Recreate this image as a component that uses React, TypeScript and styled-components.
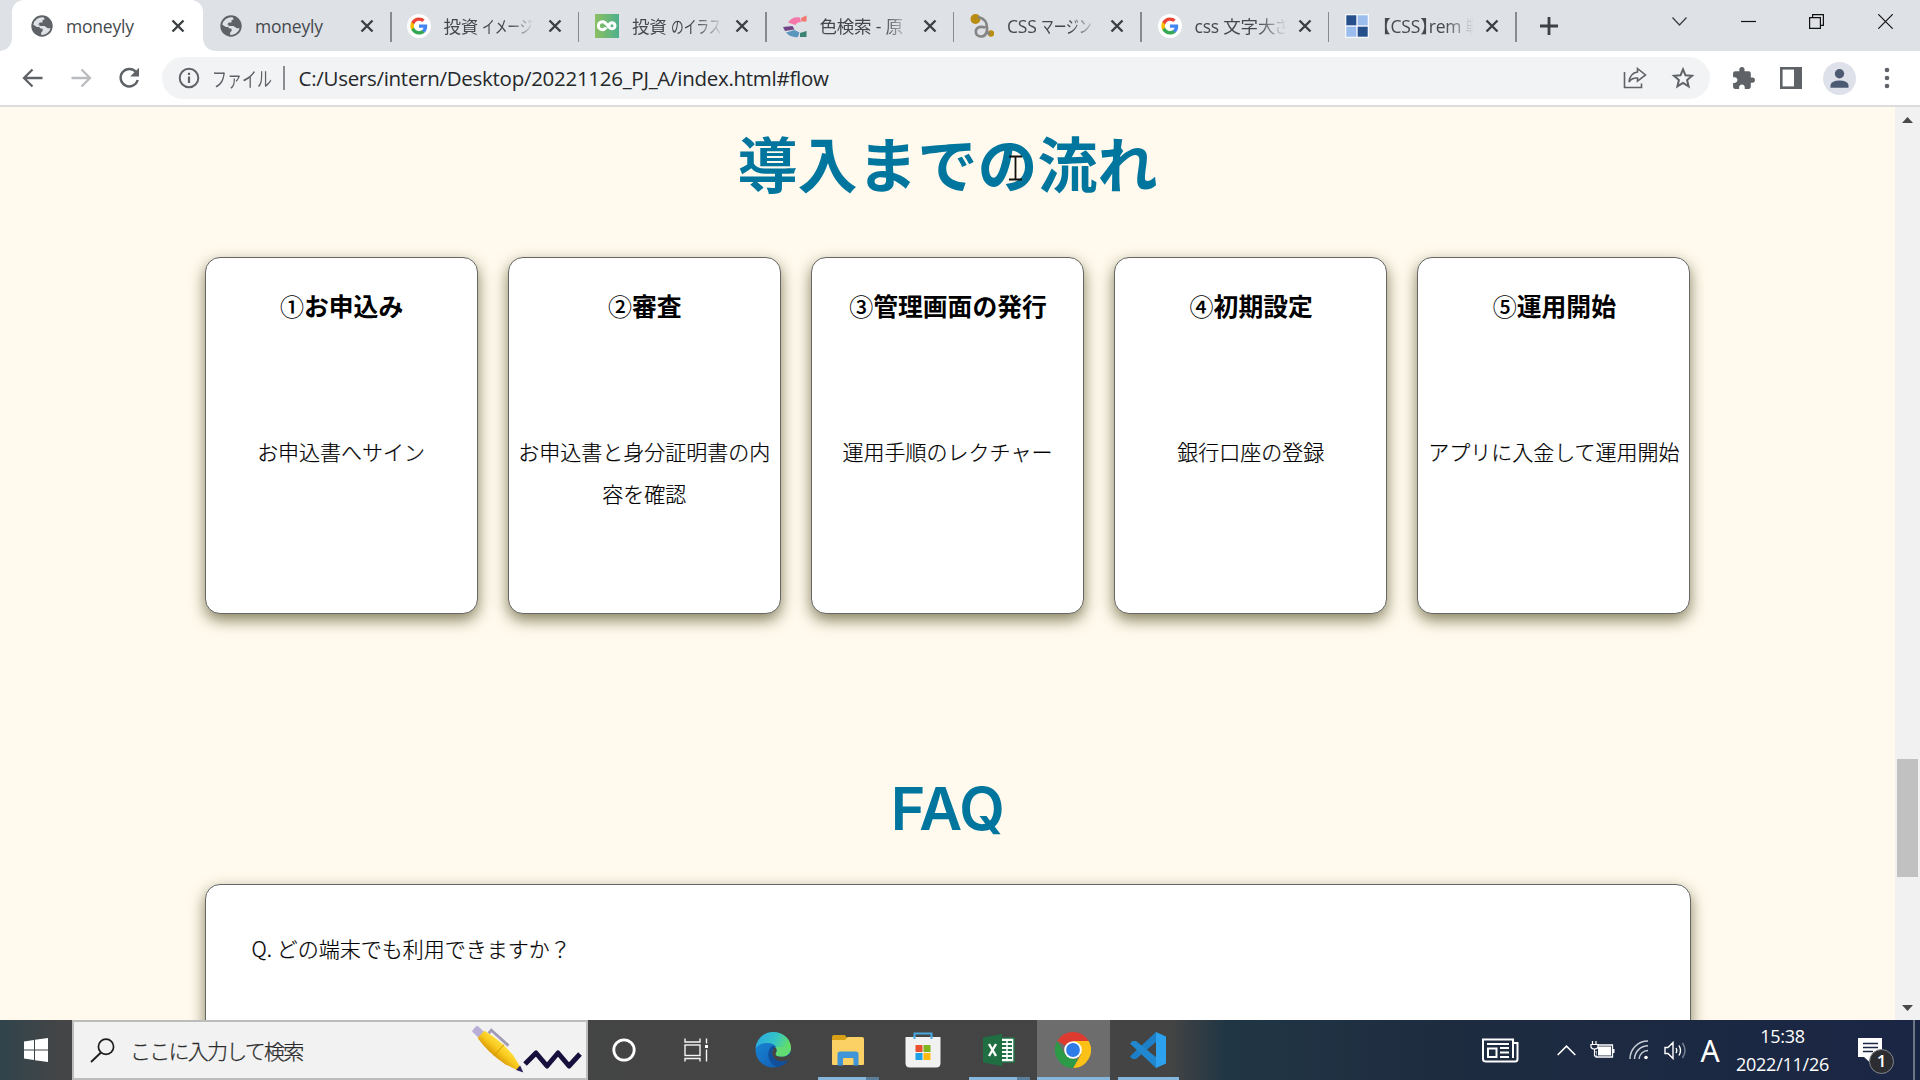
import React from "react";
import styled, { createGlobalStyle } from "styled-components";

const JP = '"Noto Sans CJK JP", sans-serif';
const UI = '"Open Sans", "Noto Sans CJK JP", sans-serif';

const GlobalStyle = createGlobalStyle`
  * { box-sizing: border-box; }
  html, body { margin: 0; padding: 0; overflow: hidden; }
  h2, h3, p { margin: 0; font-weight: inherit; }
  svg { display: block; flex: none; }
`;

const Screen = styled.div`
  width: 1920px;
  height: 1080px;
  display: flex;
  flex-direction: column;
  overflow: hidden;
  font-family: ${UI};
`;

/* ---------- browser chrome ---------- */

const TabStrip = styled.div`
  height: 51px;
  flex: none;
  background: #dee1e6;
  display: flex;
  padding-left: 12px;
`;

const Tab = styled.div<{ $active?: boolean; $divider?: boolean; $inset: number }>`
  position: relative;
  width: ${(p) => (p.$active ? 191 : 187.5)}px;
  flex: none;
  display: flex;
  align-items: center;
  padding-left: ${(p) => p.$inset}px;
  background: ${(p) => (p.$active ? "#fff" : "transparent")};
  border-radius: 12px 12px 0 0;
  &::after {
    content: "";
    display: ${(p) => (p.$divider ? "block" : "none")};
    position: absolute;
    right: -1px;
    top: 12px;
    width: 1.5px;
    height: 30px;
    background: #868b91;
  }
`;

const TabFoot = styled.span<{ $side: "left" | "right" }>`
  position: absolute;
  bottom: 0;
  ${(p) => p.$side}: -12px;
  width: 12px;
  height: 12px;
  background: radial-gradient(
    circle at ${(p) => (p.$side === "left" ? "0 0" : "100% 0")},
    transparent 11.5px,
    #fff 12px
  );
`;

const Favicon = styled.span`
  width: 24px;
  height: 24px;
  flex: none;
  display: grid;
  place-items: center;
`;

const TabTitle = styled.span<{ $fade?: boolean }>`
  width: 93px;
  margin-left: ${(p) => (p.$fade ? 13 : 12)}px;
  margin-right: auto;
  flex: none;
  white-space: nowrap;
  font-size: 17.5px;
  line-height: 30px;
  letter-spacing: -0.2px;
  font-feature-settings: "halt";
  color: #45494d;
  ${(p) => p.$fade && "mask-image: linear-gradient(90deg, #000 68%, transparent 99%);"}
`;

const Kana = styled.span<{ $count: number; $scale?: number }>`
  display: inline-block;
  transform: scaleX(${(p) => p.$scale ?? 0.73});
  transform-origin: 0 50%;
  margin-right: -${(p) => p.$count * 4.6}px;
`;

const TabClose = styled.span<{ $right: number }>`
  display: flex;
  margin-right: ${(p) => p.$right}px;
`;

const NewTab = styled.span`
  display: flex;
  align-items: center;
  margin-left: 24px;
`;

const WindowControls = styled.div`
  margin-left: auto;
  height: 43px;
  display: grid;
  grid-template-columns: repeat(4, 68.7px);
  place-items: center;
`;

const Toolbar = styled.div`
  height: 56px;
  flex: none;
  background: #fff;
  border-bottom: 2px solid #dcdcdc;
  display: flex;
  align-items: center;
  padding-left: 20px;
`;

const NavButtons = styled.div`
  width: 142px;
  display: flex;
  gap: 22px;
`;

const Omnibox = styled.div`
  width: 1548px;
  height: 42px;
  border-radius: 21px;
  background: #f1f3f4;
  display: flex;
  align-items: center;
  padding: 0 15px 0 15px;
`;

const Scheme = styled.span`
  width: 59px;
  margin-left: 11px;
  font-size: 20.5px;
  white-space: nowrap;
  color: #5f6368;
  font-family: ${JP};
`;

const OmniDivider = styled.span`
  width: 1.5px;
  height: 24px;
  margin: 0 14px 0 12px;
  background: #8a8e92;
`;

const Url = styled.span`
  font-size: 20.5px;
  letter-spacing: -0.28px;
  color: #26282b;
  white-space: nowrap;
`;

const OmniActions = styled.span`
  margin-left: auto;
  display: flex;
  gap: 24px;
`;

const ToolbarActions = styled.div`
  display: grid;
  grid-template-columns: repeat(4, 48px);
  place-items: center;
  margin-left: 9px;
`;

/* ---------- web page ---------- */

const Viewport = styled.div`
  height: 913px;
  flex: none;
  display: flex;
  overflow: hidden;
`;

const Page = styled.main`
  position: relative;
  width: 1895px;
  background: #fffaed;
  overflow: hidden;
  display: flex;
  flex-direction: column;
  align-items: center;
`;

const SectionHeading = styled.h2`
  margin-top: 10px;
  height: 90px;
  line-height: 90px;
  font-family: ${JP};
  font-size: 60px;
  font-weight: 700;
  color: #00759d;
`;

const LatinHeading = styled(SectionHeading)`
  margin-top: 150px;
  font-family: "Inter", sans-serif;
  font-size: 59px;
  font-weight: 600;
  letter-spacing: -0.6px;
`;

const Steps = styled.div`
  display: flex;
  gap: 30px;
  margin-top: 50px;
`;

const cardLook = `
  background: #fff;
  border: 1px solid #666;
  border-radius: 15px;
  box-shadow: 0 6px 15px rgba(70, 65, 20, 0.66);
`;

const StepCard = styled.section`
  ${cardLook}
  width: 273.2px;
  height: 357px;
  padding: 26px 9px 0;
  text-align: center;
  font-family: ${JP};
  color: #000;
`;

const StepTitle = styled.h3`
  padding-left: 1px;
  font-size: 24.8px;
  line-height: 42px;
  font-weight: 700;
`;

const StepNumber = styled.span`
  font-size: 24px;
  font-weight: 500;
`;

const StepText = styled.p`
  margin-top: 102.5px;
  font-size: 21px;
  line-height: 42px;
  font-weight: 300;
  -webkit-text-stroke: 0.2px #000;
`;

const FaqCard = styled.section`
  ${cardLook}
  width: 1486px;
  height: 300px;
  flex: none;
  margin-top: 30px;
  padding: 42px 46px;
`;

const Question = styled.p`
  font-family: ${JP};
  font-size: 21px;
  line-height: 42px;
  font-weight: 300;
  color: #000;
  -webkit-text-stroke: 0.2px #000;
`;

const TextCursor = styled.span`
  position: absolute;
  left: 1008px;
  top: 48px;
`;

const Scrollbar = styled.div`
  width: 25px;
  background: #f1f1f1;
  display: flex;
  flex-direction: column;
  align-items: center;
  padding: 10px 0 9px;
`;

const Thumb = styled.div`
  width: 21px;
  height: 118px;
  margin-top: 636px;
  margin-bottom: auto;
  background: #c1c1c1;
`;

/* ---------- taskbar ---------- */

const Taskbar = styled.div`
  height: 60px;
  flex: none;
  display: flex;
  background: linear-gradient(90deg, #31444c 0, #444546 62px, #444 1170px, #213644 1225px, #1e2c40 1440px, #1a2644 1900px);
`;

const StartButton = styled.div`
  width: 72px;
  display: grid;
  place-items: center;
`;

const SearchBox = styled.div`
  width: 516px;
  background: #f2f2f2;
  border: 2px solid #bcbcbc;
  display: flex;
  align-items: center;
  padding: 0 3px 0 16px;
  color: #2b2b2b;
`;

const SearchText = styled.span`
  flex: 1;
  padding-left: 15px;
  font-family: ${JP};
  font-size: 21px;
  font-weight: 300;
  letter-spacing: -1.75px;
  white-space: nowrap;
  -webkit-text-stroke: 0.25px #2b2b2b;
`;

const TaskButton = styled.div<{ $width: number; $active?: boolean }>`
  width: ${(p) => p.$width}px;
  flex: none;
  display: flex;
  flex-direction: column;
  align-items: center;
  background: ${(p) => (p.$active ? "#6d6d6d" : "transparent")};
`;

const TaskIcon = styled.span`
  height: 57px;
  padding: 3px 1px 0 0;
  display: grid;
  place-items: center;
`;

const RunningBar = styled.span<{ $width: number; $stacked?: boolean }>`
  width: ${(p) => p.$width}px;
  height: 3px;
  background: #86b6dc;
  border-right: ${(p) => (p.$stacked ? "13px solid #5a7d9a" : "0")};
`;

const Tray = styled.div`
  margin-left: auto;
  display: flex;
  align-items: center;
  color: #fff;
`;

const TrayItem = styled.span<{ $width: number }>`
  width: ${(p) => p.$width}px;
  display: grid;
  place-items: center;
`;

const ImeMode = styled(TrayItem)`
  font-size: 30px;
  line-height: 60px;
  padding-top: 1px;
  font-family: "Noto Sans", sans-serif;
`;

const Clock = styled.div`
  width: 104px;
  height: 60px;
  padding: 2px 5px 0 0;
  font-size: 18px;
  line-height: 28px;
  letter-spacing: -0.25px;
  text-align: center;
  white-space: nowrap;
`;

const Notifications = styled.div`
  position: relative;
  width: 76px;
  height: 60px;
  padding: 18px 0 0 21px;
`;

const Badge = styled.span`
  position: absolute;
  left: 32px;
  top: 29px;
  width: 25px;
  height: 25px;
  border-radius: 50%;
  border: 1.5px solid #83868a;
  background: #2b2d31;
  font-size: 17px;
  font-weight: 600;
  line-height: 22px;
  text-align: center;
`;

const ShowDesktop = styled.span`
  width: 7px;
  height: 60px;
  border-left: 2px solid #6c7585;
`;

/* ---------- icons ---------- */

const Globe = () => (
  <svg width="24" height="24" viewBox="0 0 24 24">
    <circle cx="12" cy="12" r="10.7" fill="#5f6368" />
    <path d="M13.5 3.3 A9 9 0 0 0 3.3 10.8 L7 13 H9.5 V10.5 H8 L9.8 8.6 H12.5 V6.3 L14.8 5.2 Z" fill="#dfe2e6" />
    <path d="M9.2 12 H14.5 L17.8 14.2 H20.6 A9 9 0 0 1 11.2 20.9 V18.5 L12.6 17 V14.8 L9.8 14.2 Z" fill="#dfe2e6" />
  </svg>
);

const GoogleG = () => (
  <svg width="24" height="24" viewBox="0 0 24 24">
    <circle cx="12" cy="12" r="12" fill="#fff" />
    <g transform="translate(2.6 2.6) scale(.78)">
      <path fill="#4285F4" d="M22.56 12.25c0-.78-.07-1.53-.2-2.25H12v4.26h5.92c-.26 1.37-1.04 2.53-2.21 3.31v2.77h3.57c2.08-1.92 3.28-4.74 3.28-8.09z" />
      <path fill="#34A853" d="M12 23c2.97 0 5.46-.98 7.28-2.66l-3.57-2.77c-.98.66-2.23 1.06-3.71 1.06-2.86 0-5.29-1.93-6.16-4.53H2.18v2.84C3.99 20.53 7.7 23 12 23z" />
      <path fill="#FBBC05" d="M5.84 14.09c-.22-.66-.35-1.36-.35-2.09s.13-1.43.35-2.09V7.07H2.18C1.43 8.55 1 10.22 1 12s.43 3.45 1.18 4.93l3.66-2.84z" />
      <path fill="#EA4335" d="M12 5.38c1.62 0 3.06.56 4.21 1.64l3.15-3.15C17.45 2.09 14.97 1 12 1 7.7 1 3.99 3.47 2.18 7.07l3.66 2.84c.87-2.6 3.3-4.53 6.16-4.53z" />
    </g>
  </svg>
);

const IllustAc = () => (
  <svg width="24" height="24" viewBox="0 0 24 24">
    <defs>
      <linearGradient id="iac" x1="0" x2="1" y1="0" y2="0">
        <stop offset="0" stopColor="#8cbf62" />
        <stop offset="1" stopColor="#4db08c" />
      </linearGradient>
    </defs>
    <rect width="24" height="24" fill="url(#iac)" />
    <circle cx="7.400" cy="11.700" r="4" fill="none" stroke="#fff" strokeWidth="3" strokeDasharray="21.500 3.600" strokeDashoffset="-1.800" />
    <path d="M10.500 8.500 L14 14" stroke="#fff" strokeWidth="2.600" />
    <circle cx="17" cy="11.700" r="3" fill="none" stroke="#fff" strokeWidth="3" />
  </svg>
);

const ColorWheel = () => (
  <svg width="24" height="24" viewBox="0 0 24 24">
    <path d="M18 4 L23.500 1.500 V7.500 L18.500 7.500Z" fill="#f2776f" />
    <path d="M5 8.500 Q9 2.500 17 3.500 L18 8 Q14 8 12.500 11Z" fill="#f477ab" />
    <path d="M0 13 L9.500 12 L11.500 15.500 L2 17Z" fill="#704487" />
    <path d="M3 18.500 L11.500 16 L16.500 18.500 L15 23 Q8 24 3 18.500Z" fill="#5b97bd" />
    <path d="M17 19 L23.500 17 V23 L17 23Z" fill="#3a8272" />
  </svg>
);

const SnakeMark = () => (
  <svg width="24" height="24" viewBox="0 0 24 24">
    <circle cx="5.500" cy="5" r="5" fill="#b98c12" />
    <circle cx="21" cy="19.500" r="3.200" fill="#b98c12" />
    <path d="M8 3 Q18 5 17 16 Q16 23 10.500 22.500 Q5 21.500 6 16 Q8 11.500 15.500 13.500 M17 16 Q17 20 20 19.500" fill="none" stroke="#858585" strokeWidth="2.600" />
  </svg>
);

const Checker = () => (
  <svg width="24" height="24" viewBox="0 0 24 24">
    <rect width="24" height="24" fill="#f4f7fc" />
    <rect x="1.300" y="1.300" width="10" height="10" fill="#26508c" />
    <rect x="12.700" y="1.300" width="10" height="10" fill="#9bbdee" />
    <rect x="1.300" y="12.700" width="10" height="10" fill="#9bbdee" />
    <rect x="12.700" y="12.700" width="10" height="10" fill="#26508c" />
  </svg>
);

const Stroke = ({ size, d, color = "#3c4043", width = 2, height }: { size: number; d: string; color?: string; width?: number; height?: number }) => (
  <svg width={size} height={height ?? size} viewBox={`0 0 ${size} ${height ?? size}`}>
    <path d={d} fill="none" stroke={color} strokeWidth={width} />
  </svg>
);

const Reload = () => (
  <svg width="26" height="26" viewBox="0 0 26 26">
    <path d="M20.300 7.500 A8.700 8.700 0 1 0 21.700 15" fill="none" stroke="#5f6368" strokeWidth="2.400" />
    <path d="M23 2.800 V11.500 H14.200Z" fill="#5f6368" />
  </svg>
);

const Info = () => (
  <svg width="24" height="24" viewBox="0 0 24 24">
    <circle cx="12" cy="12" r="9.300" fill="none" stroke="#5f6368" strokeWidth="2" />
    <path d="M12 10.500 V17 M12 6.700 V9" stroke="#5f6368" strokeWidth="2.200" />
  </svg>
);

const Share = () => (
  <svg width="24" height="24" viewBox="0 0 24 24">
    <path d="M1.500 6 V21.500 H18.500 V17.500 M14.500 2.500 L22.500 9 L14.500 15.200 V12 Q9 11.500 6 16 Q7 7 14.500 6Z" fill="none" stroke="#5f6368" strokeWidth="1.600" />
  </svg>
);

const Star = () => (
  <svg width="24" height="24" viewBox="0 0 24 24">
    <path d="M12 3.300 L14.500 9.300 L21 9.800 L16.100 14 L17.600 20.400 L12 17 L6.400 20.400 L7.900 14 L3 9.800 L9.500 9.300Z" fill="none" stroke="#5f6368" strokeWidth="2" />
  </svg>
);

const Puzzle = () => (
  <svg width="25" height="25" viewBox="0 0 24 24">
    <path fill="#5f6368" d="M20.5 11H19V7c0-1.1-.9-2-2-2h-4V3.5a2.5 2.5 0 0 0-5 0V5H4c-1.100 0-1.990.9-1.990 2v3.800H3.500c1.490 0 2.700 1.210 2.700 2.700s-1.210 2.700-2.700 2.700H2V20c0 1.100.9 2 2 2h3.800v-1.500c0-1.490 1.210-2.700 2.700-2.700s2.700 1.210 2.700 2.700V22H17c1.100 0 2-.9 2-2v-4h1.500a2.500 2.500 0 0 0 0-5z" />
  </svg>
);

const SidePanel = () => (
  <svg width="22" height="22" viewBox="0 0 22 22">
    <rect x="1.300" y="1.300" width="19.400" height="19.400" fill="#fff" stroke="#5f6368" strokeWidth="2.600" />
    <rect x="14" width="8" height="22" fill="#5f6368" />
  </svg>
);

const Avatar = () => (
  <svg width="33" height="33" viewBox="0 0 33 33">
    <circle cx="16.500" cy="16.500" r="16.500" fill="#dee1e9" />
    <circle cx="16.500" cy="11.700" r="4.700" fill="#4c5b72" />
    <path d="M7.500 25.800 V23 Q8.500 18.700 16.500 18.500 Q24.500 18.700 25.500 23 V25.800Z" fill="#4c5b72" />
  </svg>
);

const Dots = () => (
  <svg width="6" height="22" viewBox="0 0 6 22">
    {[3, 11, 19].map((y) => (
      <circle key={y} cx="3" cy={y} r="2.300" fill="#5f6368" />
    ))}
  </svg>
);

const IBeam = () => (
  <svg width="15" height="26" viewBox="0 0 15 26">
    <path d="M1 1.500 H14 M7.500 2 V24 M1 24.500 H14" stroke="#111" strokeWidth="1.800" fill="none" />
  </svg>
);

const Arrow = ({ up }: { up?: boolean }) => (
  <svg width="11" height="6" viewBox="0 0 11 6">
    <path d={up ? "M0 6 L5.500 0 L11 6Z" : "M0 0 L5.500 6 L11 0Z"} fill="#4a4a4a" />
  </svg>
);

const WindowsLogo = () => (
  <svg width="24" height="24" viewBox="0 0 24 24" fill="#fff">
    <path d="M0 3.400 L10 2 V11.500 H0Z M11 1.800 L24 0 V11.500 H11Z M0 12.500 H10 V22 L0 20.600Z M11 12.500 H24 V24 L11 22.200Z" />
  </svg>
);

const Magnifier = () => (
  <svg width="25" height="25" viewBox="0 0 25 25">
    <circle cx="16" cy="8.800" r="7.600" fill="none" stroke="#1e1e1e" strokeWidth="1.700" />
    <path d="M11 14.500 L1 24" stroke="#1e1e1e" strokeWidth="1.900" />
  </svg>
);

const PenDoodle = () => (
  <svg width="114" height="56" viewBox="0 0 114 56">
    <defs>
      <linearGradient id="pen" x1="0" x2="0" y1="0" y2="1">
        <stop offset="0" stopColor="#ffdf38" />
        <stop offset=".5" stopColor="#f7c81e" />
        <stop offset="1" stopColor="#d99b08" />
      </linearGradient>
    </defs>
    <g transform="translate(6 7) rotate(42)">
      <rect x="-1" y="-4" width="11" height="8" rx="1.500" fill="#b9afd6" />
      <path d="M8 -5 Q26 -9 46 -6 L60 -2 V2 L46 6 Q26 9 8 5Z" fill="url(#pen)" />
      <path d="M32 -8 V7.500" stroke="#d99b08" strokeWidth="1" />
      <path d="M13 -6 V-10 H36" fill="none" stroke="#a29bb5" strokeWidth="2.800" />
      <path d="M58 -3 L65 0 L58 3Z" fill="#2b2260" />
    </g>
    <path d="M56 42 L67 31 L78 44 L89 31 L100 44 L111 32" fill="none" stroke="#170f3c" strokeWidth="5" strokeLinejoin="round" />
  </svg>
);

const Cortana = () => (
  <svg width="26" height="26" viewBox="0 0 26 26">
    <circle cx="13" cy="13" r="10.200" fill="none" stroke="#fff" strokeWidth="2.800" />
  </svg>
);

const TaskView = () => (
  <svg width="26" height="24" viewBox="0 0 26 24" fill="none" stroke="#f5f5f5" strokeWidth="1.400">
    <path d="M1 .5 V4 H16 V.5 M1 23.500 V20.500 H16 V23.500 M22.500 .5 V5.500 M22.500 11.500 V23.500" />
    <rect x="1" y="7" width="15" height="10.500" />
    <rect x="21" y="7" width="3" height="3" fill="#fff" stroke="none" />
  </svg>
);

const Edge = () => (
  <svg width="36" height="36" viewBox="0 0 36 36">
    <defs>
      <linearGradient id="e1" x1="0" x2="1" y1=".3" y2=".6">
        <stop offset="0" stopColor="#2aa9e0" />
        <stop offset=".5" stopColor="#34c4c9" />
        <stop offset="1" stopColor="#6be255" />
      </linearGradient>
      <linearGradient id="e2" x1="0" x2="1" y1="0" y2="1">
        <stop offset="0" stopColor="#1b8bdc" />
        <stop offset="1" stopColor="#0f56a8" />
      </linearGradient>
    </defs>
    <circle cx="18" cy="18" r="17.500" fill="url(#e2)" />
    <path d="M.6 17 C1 7 8.500 0 18 0 C28.500 0 36 7.500 36 15.500 C36 21 32 24.500 27 24.500 C22.500 24.500 20.500 23 21 21.500 C23.500 18.500 22 12 14 11 C7 10.500 1.500 13.500 .6 17Z" fill="url(#e1)" />
    <path d="M17.500 14 C11.500 18 11.500 29 21 34.800 C27 35 32 31 34.300 27.500 C28 31 18 29 17 21 C16.800 18 18.500 16.500 20 15.200 C19.500 14.500 18.500 14 17.500 14Z" fill="#124f9b" />
    <path d="M21.300 20.500 C20 22.500 20.500 24.500 27 24.600 C31 24.600 33 23.500 34.500 22 L36 28 L33.500 27.800 C28 31 18.500 29.500 17.200 21.500 C17 18 18.600 16.300 20.300 15 C22 16.800 22.200 19 21.300 20.500Z" fill="#444" />
    <path d="M21.300 20.500 C20 22.500 20.500 24.500 27 24.600 C32 24.600 36 21 36 15.500 L20.300 15 C22 16.800 22.200 19 21.300 20.500Z" fill="#62db72" />
  </svg>
);

const Explorer = () => (
  <svg width="34" height="32" viewBox="0 0 34 32">
    <path d="M1 3 Q1 1 3 1 H14 L16 4 H32 V10 H1Z" fill="#d8a014" />
    <path d="M1 6 H14 L16.500 3 H31 Q33 3 33 5 V30 Q33 31 32 31 H2 Q1 31 1 30Z" fill="#fbd165" />
    <path d="M6.500 31.500 V20 Q6.500 17.500 9 17.500 H25 Q27.500 17.500 27.500 20 V31.500 H22.500 V25 Q22.500 24 21.500 24 H13 Q12 24 12 25 V31.500Z" fill="#3f95d8" />
  </svg>
);

const Store = () => (
  <svg width="36" height="36" viewBox="0 0 36 36">
    <path d="M9.500 7 V1.500 H26.500 V7" fill="none" stroke="#4aa8e0" strokeWidth="2" />
    <path d="M.5 5 H35.500 V31 Q35.500 35.500 31 35.500 H5 Q.5 35.500 .5 31Z" fill="#f1f1f1" />
    <path d="M9.500 7 V4 M26.500 7 V4" stroke="#4aa8e0" strokeWidth="2" />
    <rect x="10.500" y="13" width="7" height="7" fill="#e8502f" />
    <rect x="18.500" y="13" width="7" height="7" fill="#7fb51c" />
    <rect x="10.500" y="21" width="7" height="7" fill="#1fa1e8" />
    <rect x="18.500" y="21" width="7" height="7" fill="#fcb813" />
  </svg>
);

const Excel = () => (
  <svg width="32" height="32" viewBox="0 0 32 32">
    <rect x="17" y="4" width="14" height="24" fill="#fff" stroke="#217346" strokeWidth="1.500" />
    <path d="M19 8 H29 M19 12 H29 M19 16 H29 M19 20 H29 M19 24 H29" stroke="#217346" strokeWidth="2" />
    <path d="M24 5 V27" stroke="#fff" strokeWidth="1.500" />
    <path d="M0 3.500 L19 0 V32 L0 28.500Z" fill="#1f6f43" />
    <path d="M6 10 L13 22 M13 10 L6 22" stroke="#fff" strokeWidth="2.400" />
  </svg>
);

const Chrome = () => (
  <svg width="36" height="36" viewBox="0 0 36 36">
    <path d="M18 18 L2.400 9 A18 18 0 0 1 33.600 9Z" fill="#de3b30" />
    <path d="M18 9 H33.600 A18 18 0 0 1 18 36 L25.800 22.500Z" fill="#fbc116" />
    <path d="M2.400 9 L10.200 22.500 L18 27 H23 L18 36 A18 18 0 0 1 2.400 9Z" fill="#2c9a46" />
    <circle cx="18" cy="18" r="8.800" fill="#fff" />
    <circle cx="18" cy="18" r="6.900" fill="#2f7be8" />
  </svg>
);

const VsCode = () => (
  <svg width="36" height="36" viewBox="0 0 36 36">
    <path d="M26 0 L4 20.500 L0 24.500 L2.500 27 L6 27 L26 10Z" fill="#1c7fc7" />
    <path d="M6 9 L2.500 9 L0 11.500 L26 36 L27 26Z" fill="#2188cf" />
    <path d="M26 0 L36 4.500 V31.500 L26 36Z" fill="#2ca2ee" />
  </svg>
);

const News = () => (
  <svg width="37" height="25" viewBox="0 0 37 25" fill="none" stroke="#fff" strokeWidth="2">
    <path d="M31 5 H35.500 V21 Q35.500 23.500 33 23.500 H4 Q1 23.500 1 21 V1.500 H31 V20 M5 6 H27" />
    <rect x="6" y="10.500" width="8.500" height="8.500" />
    <path d="M18 10 H27 M18 14.500 H27 M18 19 H27" />
  </svg>
);

const Battery = () => (
  <svg width="25" height="18" viewBox="0 0 25 18">
    <path d="M6 4 H22.500 V16 H6 V10" fill="none" stroke="#fff" strokeWidth="1.300" />
    <rect x="8" y="5.500" width="13" height="9" fill="#fff" />
    <path d="M23.500 8 V12" stroke="#fff" strokeWidth="2" />
    <path d="M2.500 0 V3 M6 0 V3 M1 3.500 H8 V6 Q7.500 8 4.500 8 Q1.500 8 1 6Z M4.500 8 V15 H7" fill="#1d2a42" stroke="#fff" strokeWidth="1.200" />
  </svg>
);

const Wifi = () => (
  <svg width="20" height="20" viewBox="0 0 20 20" fill="none" stroke="#c8cdd5" strokeWidth="1.500">
    <path d="M1 19 A18 18 0 0 1 19 1 M5.500 19 A13.500 13.500 0 0 1 19 5.800 M10 19 A9 9 0 0 1 19 10.500" />
    <circle cx="17" cy="17.500" r="1.800" fill="#fff" stroke="none" />
  </svg>
);

const Volume = () => (
  <svg width="23" height="19" viewBox="0 0 23 19" fill="none" stroke="#fff" strokeWidth="1.400">
    <path d="M1 6.500 H4 L9 1.500 V17.500 L4 12.500 H1Z M12 7 Q13.500 9.500 12 12 M15 4.500 Q18 9.500 15 14.500" />
    <path d="M18.500 2 Q23.500 9.500 18.500 17" stroke="#7e8797" />
  </svg>
);

const Message = () => (
  <svg width="24" height="25" viewBox="0 0 24 25">
    <path d="M0 0 H24 V19 H12 V24.500 L6 19 H0Z" fill="#fff" />
    <path d="M5 5.500 H20 M5 9.500 H20 M5 13.500 H15" stroke="#1b2744" strokeWidth="1.500" />
  </svg>
);

/* ---------- data ---------- */

const tabs = [
  { title: "moneyly", icon: <Globe /> },
  { title: "moneyly", icon: <Globe /> },
  { title: "投資 ", kana: "イメージ", icon: <GoogleG /> },
  { title: "投資 ", kana: "のイラス", icon: <IllustAc /> },
  { title: "色検索 - 原", icon: <ColorWheel /> },
  { title: "CSS ", kana: "マージン", icon: <SnakeMark /> },
  { title: "css 文字大", kana: "さ", icon: <GoogleG /> },
  { title: "【CSS】rem ", kana: "単", icon: <Checker />, scale: 0.5 },
];

const steps = [
  ["①", "お申込み", "お申込書へサイン"],
  ["②", "審査", "お申込書と身分証明書の内容を確認"],
  ["③", "管理画面の発行", "運用手順のレクチャー"],
  ["④", "初期設定", "銀行口座の登録"],
  ["⑤", "運用開始", "アプリに入金して運用開始"],
];

export default function App() {
  return (
    <Screen>
      <GlobalStyle />
      <TabStrip>
        {tabs.map((t, i) => (
          <Tab key={i} $active={i === 0} $divider={i > 0} $inset={i === 0 ? 18 : i > 2 ? 17 : 16}>
            {i === 0 && <TabFoot $side="left" />}
            <Favicon>{t.icon}</Favicon>
            <TabTitle $fade={i > 1}>
              {t.title}
              {t.kana && <Kana $count={t.kana.length} $scale={t.scale}>{t.kana}</Kana>}
            </TabTitle>
            <TabClose $right={i === 0 ? 18 : 16.5}>
              <Stroke size={14} width={2.4} d="M1.500 1.500 L12.500 12.500 M12.500 1.500 L1.500 12.500" />
            </TabClose>
            {i === 0 && <TabFoot $side="right" />}
          </Tab>
        ))}
        <NewTab>
          <Stroke size={18} width={2.8} d="M9 0 V18 M0 9 H18" />
        </NewTab>
        <WindowControls>
          <Stroke size={15} height={9} width={1.3} d="M.5 .5 L7.500 8 L14.500 .5" />
          <Stroke size={15} width={1.2} color="#111" d="M0 7.500 H15" />
          <Stroke size={15} width={1.2} color="#111" d="M.6 3.600 H11.400 V14.400 H.6Z M3.600 3.600 V.6 H14.400 V11.400 H11.400" />
          <Stroke size={15} width={1.2} color="#111" d="M.3 .3 L14.700 14.700 M14.700 .3 L.3 14.700" />
        </WindowControls>
      </TabStrip>

      <Toolbar>
        <NavButtons>
          <Stroke size={26} width={2.3} color="#5f6368" d="M22.500 13 H4.500 M12.500 4.500 L4 13 L12.500 21.500" />
          <Stroke size={26} width={2.3} color="#b9bbbe" d="M3.500 13 H21.500 M13.500 4.500 L22 13 L13.500 21.500" />
          <Reload />
        </NavButtons>
        <Omnibox>
          <Info />
          <Scheme>
            <Kana $count={4}>ファイル</Kana>
          </Scheme>
          <OmniDivider />
          <Url>C:/Users/intern/Desktop/20221126_PJ_A/index.html#flow</Url>
          <OmniActions>
            <Share />
            <Star />
          </OmniActions>
        </Omnibox>
        <ToolbarActions>
          <Puzzle />
          <SidePanel />
          <Avatar />
          <Dots />
        </ToolbarActions>
      </Toolbar>

      <Viewport>
        <Page>
          <SectionHeading>導入までの流れ</SectionHeading>
          <Steps>
            {steps.map(([number, title, text]) => (
              <StepCard key={title}>
                <StepTitle>
                  <StepNumber>{number}</StepNumber>
                  {title}
                </StepTitle>
                <StepText>{text}</StepText>
              </StepCard>
            ))}
          </Steps>
          <LatinHeading>FAQ</LatinHeading>
          <FaqCard>
            <Question>Q. どの端末でも利用できますか？</Question>
          </FaqCard>
          <TextCursor>
            <IBeam />
          </TextCursor>
        </Page>
        <Scrollbar>
          <Arrow up />
          <Thumb />
          <Arrow />
        </Scrollbar>
      </Viewport>

      <Taskbar>
        <StartButton>
          <WindowsLogo />
        </StartButton>
        <SearchBox>
          <Magnifier />
          <SearchText>ここに入力して検索</SearchText>
          <PenDoodle />
        </SearchBox>
        <TaskButton $width={73}><TaskIcon><Cortana /></TaskIcon></TaskButton>
        <TaskButton $width={73}><TaskIcon><TaskView /></TaskIcon></TaskButton>
        <TaskButton $width={78}><TaskIcon><Edge /></TaskIcon></TaskButton>
        <TaskButton $width={73}><TaskIcon><Explorer /></TaskIcon><RunningBar $width={61} $stacked /></TaskButton>
        <TaskButton $width={76}><TaskIcon><Store /></TaskIcon></TaskButton>
        <TaskButton $width={76}><TaskIcon><Excel /></TaskIcon><RunningBar $width={61} $stacked /></TaskButton>
        <TaskButton $width={73} $active><TaskIcon><Chrome /></TaskIcon><RunningBar $width={73} /></TaskButton>
        <TaskButton $width={76}><TaskIcon><VsCode /></TaskIcon><RunningBar $width={61} /></TaskButton>
        <Tray>
          <TrayItem $width={86}><News /></TrayItem>
          <TrayItem $width={46}><Stroke size={19} height={11} width={1.6} color="#fff" d="M.7 10 L9.500 1.200 L18.300 10" /></TrayItem>
          <TrayItem $width={26}><Battery /></TrayItem>
          <TrayItem $width={48}><Wifi /></TrayItem>
          <TrayItem $width={24}><Volume /></TrayItem>
          <ImeMode $width={46}>A</ImeMode>
          <Clock>15:38<br />2022/11/26</Clock>
          <Notifications>
            <Message />
            <Badge>1</Badge>
          </Notifications>
          <ShowDesktop />
        </Tray>
      </Taskbar>
    </Screen>
  );
}
